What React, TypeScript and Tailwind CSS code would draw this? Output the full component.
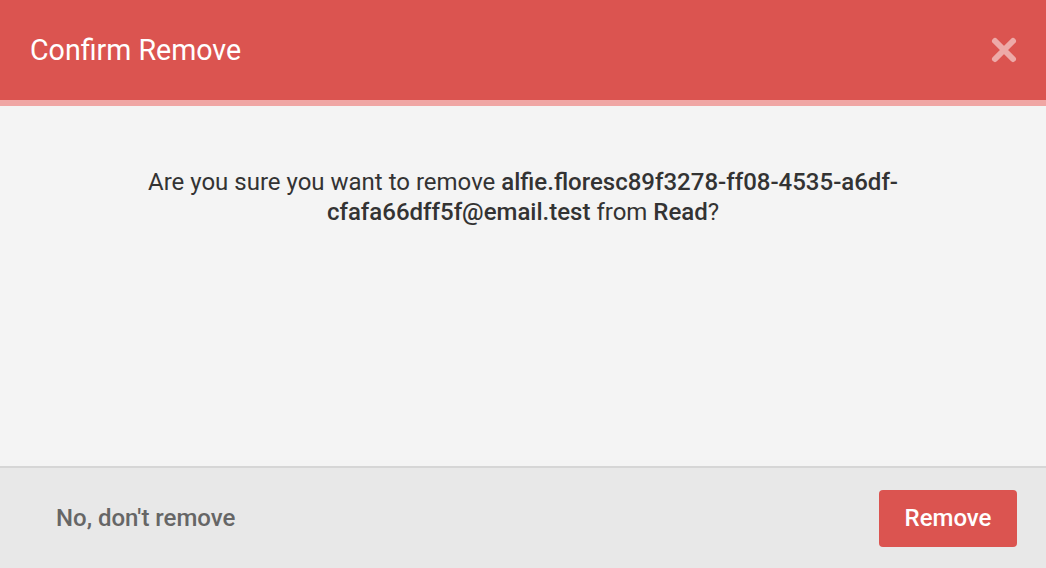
import React from "react";

export default function App() {
  return (
    <div
      className="w-[1046px] h-[568px] flex flex-col bg-[#f4f4f4] overflow-hidden"
      style={{ fontFamily: "Roboto, 'Noto Sans', sans-serif" }}
    >
      <div className="h-[100px] bg-[#db5450] flex items-center justify-between pl-[30px] pr-[27px] shrink-0">
        <h1 className="text-[28.6px] text-white font-normal leading-none">Confirm Remove</h1>
        <button className="w-[30px] h-[30px] flex items-center justify-center opacity-50">
          <svg width="28" height="28" viewBox="0 0 28 28">
            <path
              d="M5 5 L23 23 M23 5 L5 23"
              stroke="#ffffff"
              strokeWidth="6"
              strokeLinecap="round"
              fill="none"
            />
          </svg>
        </button>
      </div>
      <div className="h-[6px] bg-[#f0a6a4] shrink-0" />
      <div className="flex-1 px-[120px] pt-[61px]">
        <p className="text-center text-[24px] leading-[30px] text-[#333333]">
          Are you sure you want to remove{" "}
          <span className="font-medium">alfie.floresc89f3278-ff08-4535-a6df-cfafa66dff5f@email.test</span>{" "}
          from <span className="font-medium">Read</span>?
        </p>
      </div>
      <div className="h-[2px] bg-[#d6d6d6] shrink-0" />
      <div className="h-[100px] bg-[#e8e8e8] flex items-center justify-between pl-[56px] pr-[29px] shrink-0">
        <button className="text-[24px] font-medium text-[#666666]">No, don't remove</button>
        <button className="w-[138px] h-[57px] rounded-[4px] bg-[#db5450] text-white text-[24px] font-medium">
          Remove
        </button>
      </div>
    </div>
  );
}
